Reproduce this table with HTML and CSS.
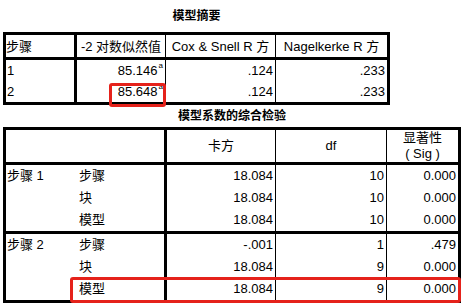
FILE: index.html
```html
<!DOCTYPE html>
<html>
<head>
<meta charset="utf-8">
<link rel="stylesheet" href="styles.css">
</head>
<body>
<div class="page">
  <div class="title t1title">模型摘要</div>
  <div class="t1">
    <div class="c hd lab">步骤</div>
    <div class="c hd ctr sep">-2 对数似然值</div>
    <div class="c hd ctr sep">Cox &amp; Snell R 方</div>
    <div class="c hd ctr">Nagelkerke R 方</div>

    <div class="c lab rl">1</div>
    <div class="c num sep">85.146<span class="sup">a</span></div>
    <div class="c num sep">.124</div>
    <div class="c num">.233</div>

    <div class="c lab rl">2</div>
    <div class="c num sep">85.648<span class="sup">a</span></div>
    <div class="c num sep">.124</div>
    <div class="c num">.233</div>
  </div>

  <div class="title t2title">模型系数的综合检验</div>
  <div class="t2">
    <div class="c hd corner"></div>
    <div class="c hd ctr sep">卡方</div>
    <div class="c hd ctr sep">df</div>
    <div class="c hd ctr two">显著性<br>( Sig )</div>

    <div class="c grp gsep">步骤 1</div>
    <div class="c sub">步骤</div>
    <div class="c num sep">18.084</div>
    <div class="c num sep">10</div>
    <div class="c num">0.000</div>
    <div class="c sub">块</div>
    <div class="c num sep">18.084</div>
    <div class="c num sep">10</div>
    <div class="c num">0.000</div>
    <div class="c sub gsep">模型</div>
    <div class="c num sep gsep">18.084</div>
    <div class="c num sep gsep">10</div>
    <div class="c num gsep">0.000</div>

    <div class="c grp">步骤 2</div>
    <div class="c sub">步骤</div>
    <div class="c num sep">-.001</div>
    <div class="c num sep">1</div>
    <div class="c num">.479</div>
    <div class="c sub">块</div>
    <div class="c num sep">18.084</div>
    <div class="c num sep">9</div>
    <div class="c num">0.000</div>
    <div class="c sub">模型</div>
    <div class="c num sep">18.084</div>
    <div class="c num sep">9</div>
    <div class="c num">0.000</div>
  </div>

  <div class="mark m1"></div>
  <div class="mark m2"></div>
</div>
</body>
</html>
```

FILE: styles.css
```css
* { box-sizing: border-box; }
body {
  margin: 0;
  background: #fff;
  color: #000;
  font-family: "Liberation Sans", "Noto Sans CJK SC", sans-serif;
  font-size: 13px;
}
.page {
  position: relative;
  width: 463px;
  height: 305px;
  overflow: hidden;
}
.title {
  font-weight: bold;
  font-size: 12px;
  text-align: center;
  margin-left: 3px;
  font-family: "Noto Sans CJK SC", sans-serif;
}
.t1title { width: 387px; height: 32px; line-height: 30px; }
.t2title { width: 458px; height: 22px; line-height: 20px; }

.t1, .t2 {
  margin-left: 3px;
  border: 3px solid #000;
  display: grid;
}
.t1 {
  width: 387px;
  grid-template-columns: 71px 89px 110px 111px;
  grid-template-rows: 25px 21px 21px;
}
.t2 {
  width: 458px;
  grid-template-columns: 70px 91px 109px 111px 71px;
  grid-template-rows: 35px 22px 22px 25px 22px 22px 22px;
}
.c {
  white-space: nowrap;
  line-height: 21px;
}
.t2 .c { line-height: 22px; }
.hd {
  border-bottom: 3px solid #000;
  line-height: 22px;
  padding-top: 1px;
}
.t2 .hd { line-height: 32px; padding-top: 0; }
.t2 .hd.two { line-height: 16px; }
.ctr { text-align: center; }
.sep { border-right: 1px solid #000; }
.lab { border-right: 3px solid #000; padding-left: 0; }
.rl { padding-left: 1px; }
.corner { grid-column: span 2; border-right: 3px solid #000; }
.num { text-align: right; padding-right: 2px; }
.sup {
  font-size: 8px;
  vertical-align: top;
  line-height: 12px;
  margin-left: 1px;
}
.grp {
  grid-row: span 3;
  padding-left: 1px;
}
.sub {
  border-right: 3px solid #000;
  padding-left: 3px;
}
.gsep { border-bottom: 3px solid #000; }

.mark {
  position: absolute;
  border: 3px solid #e5221b;
  border-radius: 3px;
}
.m1 { left: 109px; top: 83px; width: 57px; height: 24px; }
.m2 { left: 70px; top: 277px; width: 391px; height: 26px; }
```
